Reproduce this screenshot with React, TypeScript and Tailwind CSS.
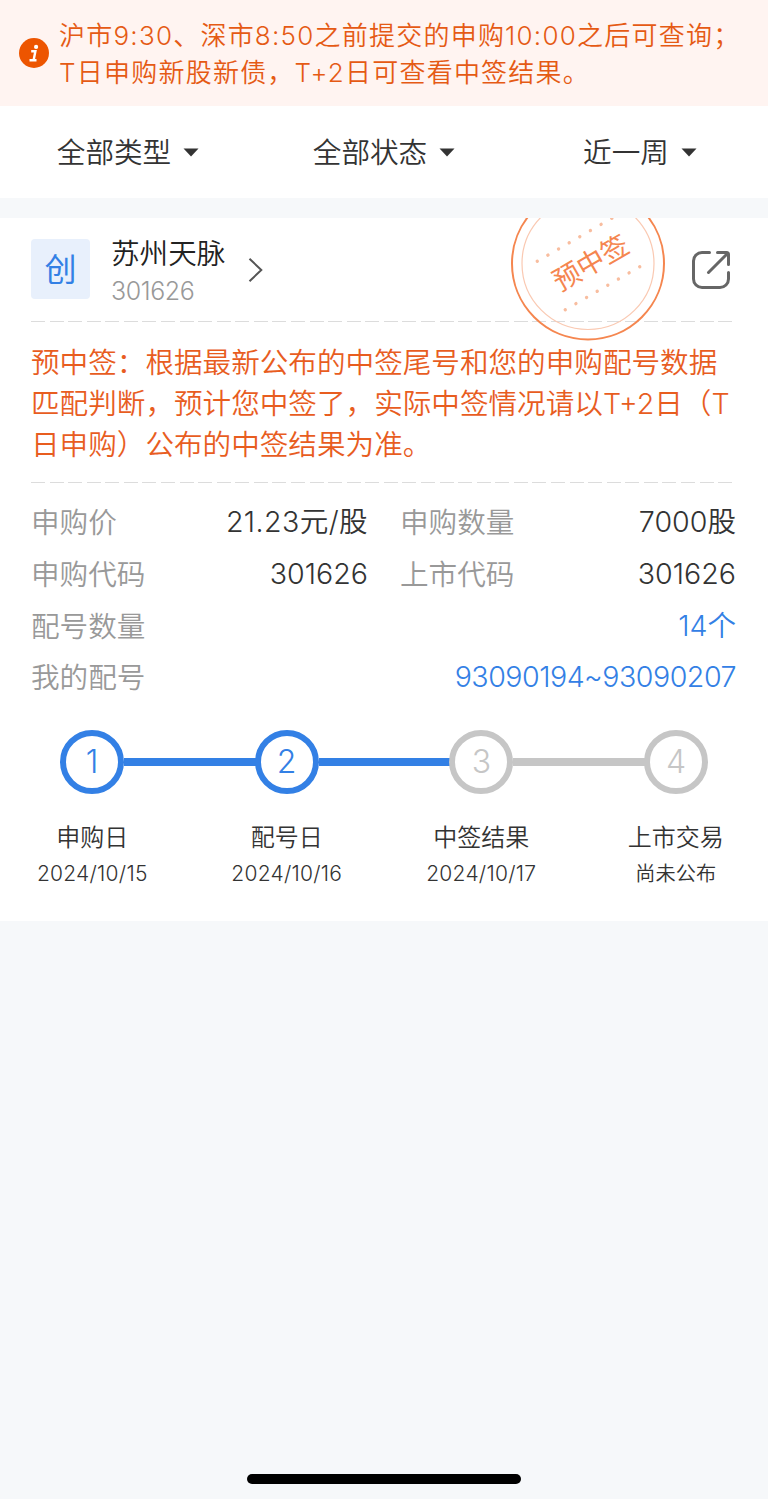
import type { ReactNode } from 'react';

const FILTERS = ['全部类型', '全部状态', '近一周'];

const NOTICE_LINES = ['沪市9:30、深市8:50之前提交的申购10:00之后可查询；', 'T日申购新股新债，T+2日可查看中签结果。'];

const HINT_LINES = [
  '预中签：根据最新公布的中签尾号和您的申购配号数据',
  '匹配判断，预计您中签了，实际中签情况请以T+2日（T',
  '日申购）公布的中签结果为准。',
];

const STEPS = [
  { label: '申购日', date: '2024/10/15', done: true },
  { label: '配号日', date: '2024/10/16', done: true },
  { label: '中签结果', date: '2024/10/17', done: false },
  { label: '上市交易', date: '尚未公布', done: false },
];

const DOTS = [-43, -30.7, -18.4, -6.1, 6.1, 18.4, 30.7, 43];

function InfoIcon() {
  return (
    <svg className="shrink-0" width="30" height="30" viewBox="0 0 30 30">
      <circle cx="15" cy="15" r="15" fill="#ED5500" />
      <circle cx="17.1" cy="8.9" r="2.1" fill="#fff" />
      <path d="M12.2 13.2h4.2l-1.8 9M10.5 22.2h7" fill="none" stroke="#fff" strokeWidth="2.4" />
    </svg>
  );
}

function ShareIcon() {
  return (
    <svg className="shrink-0" width="40" height="40" viewBox="0 0 40 40" fill="none" stroke="#666" strokeWidth="3" strokeLinecap="round">
      <path d="M18.5 2.5H11A8.5 8.5 0 0 0 2.5 11v18A8.5 8.5 0 0 0 11 37.5h18A8.5 8.5 0 0 0 37.5 29v-6.5" />
      <path d="M17.5 22.5 37 3M26.5 2.5H35.5a2 2 0 0 1 2 2V14.5" />
    </svg>
  );
}

function Stamp() {
  return (
    <svg className="absolute left-[510px] top-0" width="156" height="124" viewBox="0 0 156 124" fill="none">
      <circle cx="78" cy="45.5" r="76" stroke="#F5864F" strokeWidth="2" />
      <circle cx="78" cy="45.5" r="66" stroke="#FAC9B2" strokeWidth="1.2" />
      <g transform="translate(78.5 46) rotate(-30)" fill="#F8BD9F">
        {DOTS.map((x) => <circle key={x} cx={x} cy={-28} r="1.7" />)}
        {DOTS.map((x) => <circle key={x} cx={x} cy={28} r="1.7" />)}
        <text x="2.5" y="10" textAnchor="middle" fontSize="27.5" fontWeight="400" fill="#F5864F">预中签</text>
      </g>
    </svg>
  );
}

function DashedLine() {
  return <div className="h-px bg-[repeating-linear-gradient(90deg,#DCDCDC_0,#DCDCDC_14px,transparent_14px,transparent_18.57px)]" />;
}

function Row({ label, blue, children }: { label: string; blue?: boolean; children: ReactNode }) {
  return (
    <div className="flex h-[51.6px] items-center justify-between">
      <span className="text-[#999]">{label}</span>
      <span className={`pb-0.5 ${blue ? 'text-[#3380E5]' : 'text-[#333]'}`}>{children}</span>
    </div>
  );
}

export default function App() {
  return (
    <div lang="zh-CN" className="flex h-[1499px] w-[768px] flex-col overflow-hidden bg-[#F6F8FA] font-['Inter','Noto_Sans_CJK_SC',sans-serif] text-[28.6px] font-[350] text-[#333]">
      {/* 提示 */}
      <div className="flex h-[106px] items-center bg-[#FFF4F1] pl-[19px] text-[#E55A14]">
        <InfoIcon />
        <div className="ml-[10px] mt-0.5 whitespace-nowrap text-[26px] leading-[37px] tracking-[1.23px]">
          {NOTICE_LINES.map((l) => <p key={l}>{l}</p>)}
        </div>
      </div>

      {/* 筛选 */}
      <div className="grid h-[92px] grid-cols-3 items-center bg-white">
        {FILTERS.map((f) => (
          <div key={f} className="flex items-center justify-center gap-3">
            <span className="pt-[3px]">{f}</span>
            <svg className="mt-px" width="16" height="9" viewBox="0 0 16 9" fill="#333"><path d="M.5 .5h15L8 8.5z" /></svg>
          </div>
        ))}
      </div>

      {/* 新股卡片 */}
      <div className="relative mt-5 h-[703px] bg-white">
        <div className="flex h-[103px] items-center pl-[31px] pr-[37px]">
          <div className="mb-0.5 flex h-[60px] w-[59px] items-center justify-center rounded-[4px] bg-[#E8F0FC] pt-0.5 text-[32px] font-normal text-[#3380E5]">创</div>
          <div className="ml-[21px] mt-1">
            <p className="leading-[38px] text-[#222]">苏州天脉</p>
            <p className="text-[25px] leading-[36px] tracking-[-0.4px] text-[#999]">301626</p>
          </div>
          <svg className="ml-[23px]" width="16" height="26" viewBox="0 0 16 26" fill="none" stroke="#555" strokeWidth="2"><path d="M1.5 1.8 13.3 13 1.5 24.2" /></svg>
          <div className="ml-auto"><ShareIcon /></div>
        </div>
        <Stamp />

        <div className="pl-[31px] pr-[35px]">
          <DashedLine />
          <div className="mt-5 whitespace-nowrap leading-[41px] text-[#E85D1F]">
            {HINT_LINES.map((l) => <p key={l}>{l}</p>)}
          </div>
          <div className="mt-[17px]"><DashedLine /></div>
        </div>

        <div className="mt-[15px] pl-[31px] pr-8">
          <div className="grid grid-cols-[337px_336px] justify-between">
            <Row label="申购价"><span className="tracking-[0.4px]">21.23元/股</span></Row>
            <Row label="申购数量">7000股</Row>
            <Row label="申购代码">301626</Row>
            <Row label="上市代码">301626</Row>
          </div>
          <Row label="配号数量" blue>14个</Row>
          <Row label="我的配号" blue><span className="tracking-[-0.5px]">93090194~93090207</span></Row>
        </div>

        {/* 进度 */}
        <div className="mt-[26px] flex items-center px-[60px]">
          {STEPS.map((s, i) => (
            <div key={s.label} className={i ? 'flex flex-1 items-center' : 'flex items-center'}>
              {i > 0 && <div className={`-mr-px h-2 flex-1 ${STEPS[i - 1].done ? 'bg-[#3380E5]' : 'bg-[#C6C6C6]'}`} />}
              <div className={`flex size-16 items-center justify-center rounded-full border-[6px] text-[32px] font-light ${s.done ? 'border-[#3380E5] text-[#3380E5]' : 'border-[#C6C6C6] text-[#C6C6C6]'}`}>{i + 1}</div>
            </div>
          ))}
        </div>
        <div className="-ml-[5px] mt-[26px] grid w-[778px] grid-cols-4 text-center">
          {STEPS.map((s) => (
            <div key={s.label}>
              <p className="text-2xl leading-9">{s.label}</p>
              <p className={s.date.includes('/') ? 'text-[21px] leading-9 tracking-[0.25px]' : 'text-[20.2px] leading-9'}>{s.date}</p>
            </div>
          ))}
        </div>
      </div>

      <div className="mx-auto mb-[15px] mt-auto h-[10px] w-[274px] rounded-full bg-black" />
    </div>
  );
}
